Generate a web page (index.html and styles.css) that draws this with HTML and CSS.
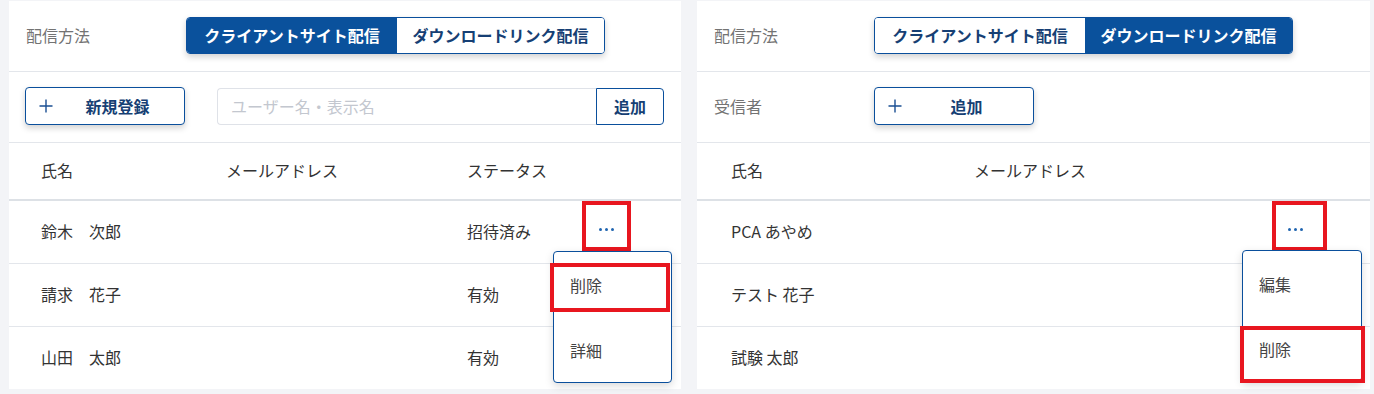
FILE: index.html
```html
<!DOCTYPE html>
<html lang="ja">
<head>
    <meta charset="UTF-8">
    <meta content="width=device-width, initial-scale=1.0" name="viewport">
    <title>配信設定</title>
    <link rel="stylesheet" href="styles.css">
</head>
<body>
<div class="page">
    <div class="panel">
        <div class="form-row">
            <span class="label">配信方法</span>
            <div class="toggle">
                <span class="seg seg-left on">クライアントサイト配信</span>
                <span class="seg seg-right">ダウンロードリンク配信</span>
            </div>
        </div>
        <div class="form-row plain">
            <button class="add-btn">
                <svg class="plus" width="14" height="14" viewBox="0 0 14 14"><path d="M7 0.5V13.5M0.5 7H13.5" stroke="#1a4f93" stroke-width="1.4" fill="none"/></svg>
                <span class="add-text">新規登録</span>
            </button>
            <div class="search">
                <input type="text" placeholder="ユーザー名・表示名">
                <button class="search-btn">追加</button>
            </div>
        </div>
        <div class="table left-table">
            <div class="tr th">
                <span>氏名</span>
                <span>メールアドレス</span>
                <span>ステータス</span>
                <span></span>
            </div>
            <div class="tr">
                <span>鈴木　次郎</span>
                <span></span>
                <span>招待済み</span>
                <div class="action">
                    <button class="dots mark"><i></i><i></i><i></i></button>
                    <div class="menu menu-left">
                        <div class="item mark-item mark-a">削除</div>
                        <div class="item">詳細</div>
                    </div>
                </div>
            </div>
            <div class="tr">
                <span>請求　花子</span>
                <span></span>
                <span>有効</span>
                <span></span>
            </div>
            <div class="tr">
                <span>山田　太郎</span>
                <span></span>
                <span>有効</span>
                <span></span>
            </div>
        </div>
    </div>

    <div class="panel">
        <div class="form-row">
            <span class="label">配信方法</span>
            <div class="toggle">
                <span class="seg seg-left">クライアントサイト配信</span>
                <span class="seg seg-right on">ダウンロードリンク配信</span>
            </div>
        </div>
        <div class="form-row">
            <span class="label">受信者</span>
            <button class="add-btn">
                <svg class="plus" width="14" height="14" viewBox="0 0 14 14"><path d="M7 0.5V13.5M0.5 7H13.5" stroke="#1a4f93" stroke-width="1.4" fill="none"/></svg>
                <span class="add-text">追加</span>
            </button>
        </div>
        <div class="table right-table">
            <div class="tr th">
                <span>氏名</span>
                <span>メールアドレス</span>
                <span></span>
            </div>
            <div class="tr">
                <span>PCA あやめ</span>
                <span></span>
                <div class="action">
                    <button class="dots mark"><i></i><i></i><i></i></button>
                    <div class="menu menu-right">
                        <div class="item">編集</div>
                        <div class="item mark-item mark-b">削除</div>
                    </div>
                </div>
            </div>
            <div class="tr">
                <span>テスト 花子</span>
                <span></span>
                <span></span>
            </div>
            <div class="tr">
                <span>試験 太郎</span>
                <span></span>
                <span></span>
            </div>
        </div>
    </div>
</div>
</body>
</html>
```

FILE: styles.css
```css
* {
    box-sizing: border-box;
}

body {
    margin: 0;
    background: #f3f4f7;
    font-family: "Noto Sans CJK JP", "Noto Sans", sans-serif;
    font-size: 16px;
    color: #333;
}

.page {
    display: flex;
    gap: 16px;
    padding: 1px 4px 0 9px;
    height: 394px;
}

.panel {
    width: 672px;
    height: 388px;
    background: #fff;
}

.panel + .panel {
    width: 673px;
}

.form-row {
    display: flex;
    align-items: center;
    height: 71px;
    padding-left: 17px;
    padding-bottom: 2px;
    border-bottom: 1px solid #e3e6eb;
}

.form-row.plain {
    padding-left: 16px;
}

.label {
    width: 160px;
    color: #737373;
}

.toggle {
    display: flex;
    height: 37px;
    border: 1px solid #0a4f9c;
    border-radius: 4px;
    overflow: hidden;
    box-shadow: 0 3px 6px rgba(0, 0, 0, 0.18);
}

.seg {
    display: flex;
    align-items: center;
    justify-content: center;
    font-weight: bold;
    color: #163f74;
    background: #fff;
}

.seg-left {
    width: 210px;
}

.seg-right {
    width: 207px;
}

.seg.on {
    background: #0a519c;
    color: #fff;
}

.add-btn {
    display: flex;
    align-items: center;
    width: 160px;
    height: 38px;
    padding: 0 12px 0 13px;
    border: 1px solid #0a4f9c;
    border-radius: 4px;
    background: #fff;
    box-shadow: 0 3px 6px rgba(0, 0, 0, 0.18);
    font-family: inherit;
    font-size: 16px;
    cursor: pointer;
}

.plus {
    flex: none;
}

.add-text {
    flex: 1;
    padding-left: 10px;
    text-align: center;
    font-weight: bold;
    color: #163f74;
}

.search {
    display: flex;
    margin-left: 32px;
    height: 37px;
}

.search input {
    width: 379px;
    height: 37px;
    padding: 0 13px;
    border: 1px solid #dfe2e8;
    border-right: none;
    border-radius: 4px 0 0 4px;
    font-family: inherit;
    font-size: 16px;
    outline: none;
}

.search input::placeholder {
    color: #c3c7cf;
}

.search-btn {
    width: 68px;
    height: 37px;
    border: 1px solid #0a4f9c;
    border-radius: 0 4px 4px 0;
    background: #fff;
    font-family: inherit;
    font-size: 16px;
    font-weight: bold;
    color: #163f74;
}

.tr {
    display: grid;
    align-items: center;
    height: 63px;
    padding-bottom: 2px;
    border-bottom: 1px solid #e3e6eb;
}

.tr:last-child {
    border-bottom: none;
    height: 61px;
}

.tr.th {
    height: 58px;
    border-bottom: 2px solid #dde1e6;
}

.left-table .tr {
    padding-left: 32px;
    grid-template-columns: 185px 241px 115px 49px;
}

.right-table .tr {
    padding-left: 34px;
    grid-template-columns: 243px 298px 49px;
}

.action {
    position: relative;
    align-self: start;
    height: 50px;
}

.dots {
    display: flex;
    align-items: center;
    justify-content: center;
    gap: 3px;
    width: 49px;
    height: 50px;
    padding: 6px 0 0;
    border: none;
    background: none;
}

.dots i {
    width: 3px;
    height: 3px;
    border-radius: 50%;
    background: #1f64b0;
}

.mark {
    outline: 4px solid #e8161f;
    outline-offset: -4px;
}

.right-table .mark {
    width: 55px;
    padding-right: 9px;
}

.menu {
    position: absolute;
    z-index: 2;
    width: 119px;
    background: #fff;
    border: 1px solid #0a4f9c;
    border-radius: 4px;
    box-shadow: 0 3px 8px rgba(0, 0, 0, 0.15);
}

.menu-left {
    left: -29px;
    top: 50px;
}

.menu-right {
    left: -30px;
    top: 49px;
    width: 120px;
}

.item {
    position: relative;
    display: flex;
    align-items: center;
    height: 65px;
    padding-left: 16px;
    color: #444;
}

.mark-item::after {
    content: "";
    position: absolute;
    border: 4px solid #e8161f;
}

.mark-a::after {
    left: -4px;
    right: 1px;
    top: 11px;
    bottom: 5px;
}

.mark-b::after {
    left: -3px;
    right: -4px;
    top: 10px;
    bottom: -2px;
}
```
